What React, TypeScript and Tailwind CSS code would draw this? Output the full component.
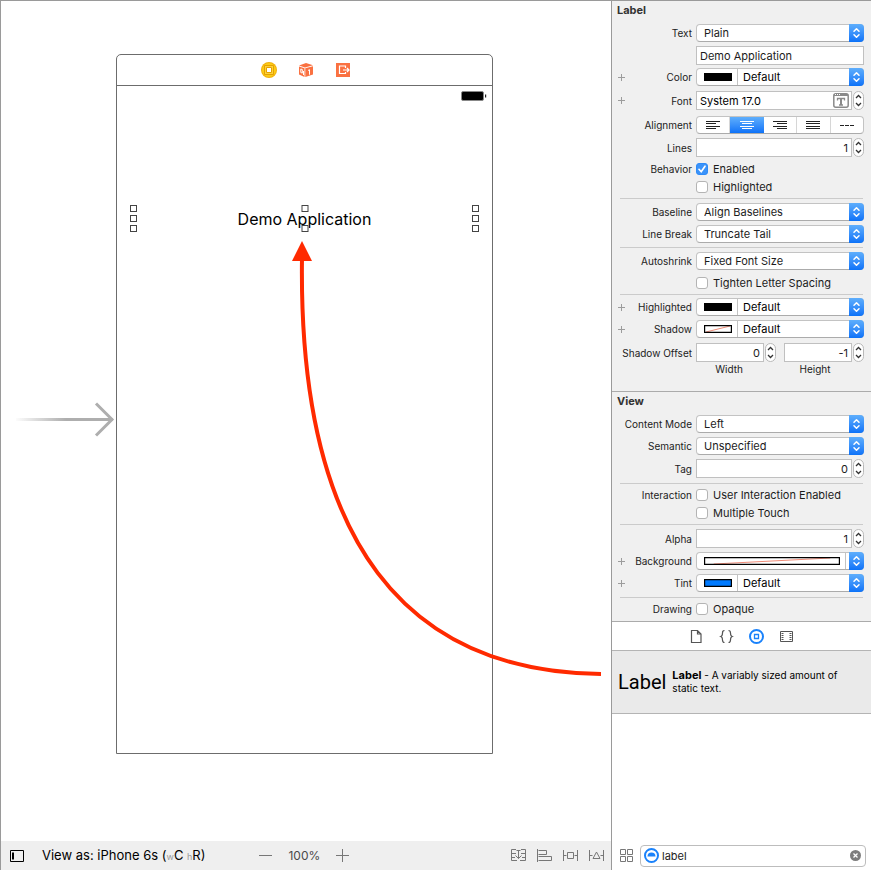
import { useState, type ReactNode } from "react";

const sans = "font-['Inter','Open_Sans',sans-serif]";

function Row({ label, htmlFor, plus, className = "", children }: { label?: string; htmlFor?: string; plus?: boolean; className?: string; children: ReactNode }) {
  return (
    <div className={"flex items-center " + className}>
      <div className="flex w-20 shrink-0 items-center justify-between pl-1.5">
        {plus ? (
          <button type="button" aria-label={"Add " + label + " variation"} className="flex h-2 w-2 items-center text-[#9c9c9c]">
            <svg width="7" height="7" viewBox="0 0 7 7" stroke="currentColor" fill="none"><path d="M3.5 0v7M0 3.5h7" /></svg>
          </button>
        ) : (
          <span />
        )}
        {label && <label htmlFor={htmlFor} className="whitespace-nowrap text-[10px] leading-4 text-[#222]">{label}</label>}
      </div>
      <div className="ml-1 mr-[7px] flex min-w-0 flex-1 items-center">{children}</div>
    </div>
  );
}

function Cap() {
  return (
    <span className="pointer-events-none absolute -inset-y-px -right-px flex w-[15px] items-center justify-center rounded-r-[4px] bg-linear-to-b from-[#5eaefc] to-[#0a72f8]">
      <svg width="9" height="12" viewBox="0 0 9 12" fill="none" stroke="#fff" strokeWidth="1.5" strokeLinecap="round" strokeLinejoin="round"><path d="M2 4.3 4.5 1.8 7 4.3M2 7.7l2.5 2.5L7 7.7" /></svg>
    </span>
  );
}

const shell = "relative flex h-[18px] w-full min-w-0 rounded-[4px] border border-[#c3c3c3] border-b-[#ababab] bg-white";

function Popup({ id, value }: { id: string; value: string }) {
  return (
    <div className={shell}>
      <select id={id} className="w-full appearance-none rounded-[4px] bg-transparent pl-[7px] pr-5 text-[11px] leading-4 text-[#1c1c1c] outline-none">
        <option>{value}</option>
      </select>
      <Cap />
    </div>
  );
}

function Swatch({ kind }: { kind: string }) {
  return (
    <svg className="h-2 w-full" viewBox="0 0 28 8" preserveAspectRatio="none">
      <rect width="28" height="8" fill={kind === "tint" ? "#007aff" : kind === "black" ? "#000" : "#fff"} />
      {kind === "clear" && <path d="M2 7 26 1" stroke="#f08c78" vectorEffect="non-scaling-stroke" fill="none" />}
      <rect width="28" height="8" fill="none" stroke="#000" strokeWidth="2.4" vectorEffect="non-scaling-stroke" />
    </svg>
  );
}

function ColorPopup({ id, kind, wide }: { id: string; kind: string; wide?: boolean }) {
  return (
    <div className={shell}>
      <button type="button" aria-label="Colour well" className={"flex items-center border-r border-[#c3c3c3] pl-[7px] " + (wide ? "mr-[17px] flex-1 pr-[5px]" : "w-[41px] pr-[5px]")}>
        <Swatch kind={kind} />
      </button>
      {wide ? null : (
        <select id={id} className="min-w-0 flex-1 appearance-none bg-transparent pl-[5px] text-[11px] leading-4 text-black outline-none">
          <option>Default</option>
        </select>
      )}
      <Cap />
    </div>
  );
}

function Stepper({ name }: { name: string }) {
  return (
    <span className="ml-px flex h-[19px] w-[11px] shrink-0 flex-col overflow-hidden rounded-full border border-[#b9b9b9] bg-white text-[#333]">
      <button type="button" aria-label={"Increase " + name} className="flex flex-1 items-center justify-center">
        <svg width="7" height="5" viewBox="0 0 7 5" fill="none" stroke="currentColor" strokeWidth="1.3"><path d="M1 4 3.5 1.5 6 4" /></svg>
      </button>
      <button type="button" aria-label={"Decrease " + name} className="flex flex-1 items-center justify-center">
        <svg width="7" height="5" viewBox="0 0 7 5" fill="none" stroke="currentColor" strokeWidth="1.3"><path d="M1 1l2.5 2.5L6 1" /></svg>
      </button>
    </span>
  );
}

const box = "h-[19px] w-full min-w-0 flex-1 border border-[#c0c0c0] bg-white px-[3px] text-[11px] leading-4 text-[#1c1c1c] outline-none";

function NumberField({ id, value, name }: { id: string; value: string; name: string }) {
  return (
    <>
      <input id={id} aria-label={name} defaultValue={value} className={box + " text-right"} />
      <Stepper name={name} />
    </>
  );
}

function Check({ id, text, on }: { id: string; text: string; on?: boolean }) {
  return (
    <label htmlFor={id} className="flex h-[18px] items-center gap-[5px] whitespace-nowrap text-[11px] leading-4 text-[#1c1c1c]">
      <span className="relative flex h-3 w-3">
        <input id={id} type="checkbox" defaultChecked={on} className="peer h-3 w-3 appearance-none rounded-[3px] border border-[#b4b4b4] bg-white checked:border-[#2d8bf8] checked:bg-[#3b93f9]" />
        <svg className="pointer-events-none absolute inset-0 hidden peer-checked:block" width="12" height="12" viewBox="0 0 12 12" fill="none" stroke="#fff" strokeWidth="1.7" strokeLinecap="round"><path d="m3 6.3 2.2 2.4L9 3.2" /></svg>
      </span>
      {text}
    </label>
  );
}

function Rule({ className = "mt-1" }: { className?: string }) {
  return <hr className={"ml-2 mr-2 border-[#cbcbcb] " + className} />;
}

const alignments = [
  ["Left", "M0 .5h14M0 2.500h10M0 5.500h14M0 7.500h10"],
  ["Center", "M0 .5h14M2 2.500h10M0 5.500h14M2 7.500h10"],
  ["Right", "M0 .5h14M4 2.500h10M0 5.500h14M4 7.500h10"],
  ["Justified", "M0 .5h14M0 2.500h14M0 5.500h14M0 7.500h14"],
  ["Natural", "M0 4.500h4M5 4.500h4M10 4.500h4"],
];

function Alignment() {
  const [current, setCurrent] = useState("Center");
  return (
    <div role="group" aria-label="Alignment" className="flex h-[18px] w-full overflow-hidden rounded-[4px] border border-[#c3c3c3] border-b-[#ababab] bg-white">
      {alignments.map(([name, d]) => (
        <button
          key={name}
          type="button"
          aria-label={name}
          aria-pressed={current === name}
          onClick={() => setCurrent(name)}
          className={"flex flex-1 items-center justify-center border-r border-[#d6d6d6] last:border-r-0 " + (current === name ? "border-r-transparent bg-[#0a72f8] bg-linear-to-b from-[#5eaefc] to-[#0a72f8] text-white" : "text-[#222]")}
        >
          <svg width="14" height="8" viewBox="0 0 14 8" fill="none" stroke="currentColor" shapeRendering="crispEdges"><path d={d} /></svg>
        </button>
      ))}
    </div>
  );
}

function Handles({ count, className }: { count: number; className: string }) {
  return (
    <div className={"absolute flex h-[27px] flex-col justify-between " + className}>
      {Array.from({ length: count }, (_, i) => (
        <span key={i} className="h-[7px] w-[7px] border border-[#444] bg-white" />
      ))}
    </div>
  );
}

function Device() {
  return (
    <section className="relative flex h-[700px] w-[377px] flex-col rounded-t-[5px] border border-[#6c6c6c] bg-white">
      <header className="flex h-[31px] items-center justify-center gap-[21px] border-b border-[#6c6c6c] pl-0.5">
        <button type="button" aria-label="View Controller">
          <svg width="16" height="16" viewBox="0 0 16 16"><circle cx="8" cy="8" r="8" fill="#f0b00c" /><circle cx="8" cy="8" r="7" fill="#fccb16" /><path d="M3.5 3.5h9v9h-9z" fill="#fdd23a" stroke="#e5a100" /><path d="M5.500 5.500h5v5h-5z" fill="#fff" stroke="#e5a100" /></svg>
        </button>
        <button type="button" aria-label="First Responder">
          <svg width="16" height="16" viewBox="0 0 16 16" fill="#fa7141"><path d="M1 3.500 8 1l7 2.300L7 5.500z" /><path d="M1 4.500 6.500 6.300V15L1 12.500zM7.300 6.300 15 4.200v8.300L7.300 15z" /><path d="M2.800 7v3.500l1.500.6V7.500zM5.500 9v4M10 8.500l1.500-.8v5" stroke="#fff" fill="none" /></svg>
        </button>
        <button type="button" aria-label="Exit">
          <svg width="16" height="16" viewBox="0 0 16 16"><path d="M1 1h14v14H1z" fill="#fa7141" /><path d="M10.500 6V4h-6v7.500h6V10M8 8h6M12 6l2 2-2 2" stroke="#fff" strokeWidth="1.200" fill="none" /></svg>
        </button>
      </header>
      <div className="flex justify-end pr-[5px] pt-[5px]">
        <svg width="26" height="10" viewBox="0 0 26 10"><rect x=".5" y=".5" width="22" height="9" rx="1.500" fill="#000" stroke="#888" /><path d="M24 3.500h1.200v3H24z" fill="#222" /></svg>
      </div>
      <div className="relative mx-3 mt-[104px] flex h-[27px] items-center justify-center">
        <span className="text-[16px] leading-6 text-black">Demo Application</span>
        <Handles count={3} className="left-px" />
        <Handles count={2} className="left-1/2 -translate-x-1/2" />
        <Handles count={3} className="right-px" />
      </div>
    </section>
  );
}

function Canvas() {
  return (
    <main className="flex min-w-0 flex-1 flex-col border-l border-[#9a9a9a]">
      <div className="relative flex-1 overflow-hidden bg-white pl-[115px] pt-[53px]">
        <Device />
        <svg className="pointer-events-none absolute left-0 top-0" width="610" height="700" viewBox="1 1 610 700" fill="none">
          <defs>
            <linearGradient id="fade" gradientUnits="userSpaceOnUse" x1="14" y1="0" x2="66" y2="0"><stop stopColor="#aeaeae" stopOpacity="0" /><stop offset="1" stopColor="#aeaeae" /></linearGradient>
          </defs>
          <path d="M16 418h97v3H16z" fill="url(#fade)" />
          <path d="m96 403.500 16 16-16 16" stroke="#aeaeae" strokeWidth="3" />
          <path d="M601 674C408 672 298 545 302 258" stroke="#ff2a00" strokeWidth="4" />
          <path d="m302 241 10 20h-20z" fill="#ff2a00" />
        </svg>
      </div>
      <footer className="flex h-[29px] shrink-0 items-center bg-[#efefef] pl-[9px] pr-[7px] text-[12px] leading-4 text-black">
        <button type="button" aria-label="Document outline">
          <svg width="14" height="12" viewBox="0 0 14 12" fill="none" stroke="#000"><path d="M.5.5h13v11H.5z" /><path d="M3 2.500v7" strokeWidth="2" /></svg>
        </button>
        <button type="button" className="ml-[18px] whitespace-nowrap text-[13px]">View as: iPhone 6s (<span className="text-[9px] text-[#999]">w</span>C <span className="text-[9px] text-[#999]">h</span>R)</button>
        <div className="ml-[54px] flex items-center gap-4 text-[#4a4a4a]">
          <button type="button" aria-label="Zoom out"><svg className="block" width="13" height="13" stroke="#777"><path d="M0 6.500h13" /></svg></button>
          <span>100%</span>
          <button type="button" aria-label="Zoom in"><svg className="block" width="13" height="13" stroke="#777"><path d="M0 6.500h13M6.500 0v13" /></svg></button>
        </div>
        <div className="ml-auto flex items-center gap-[11px] text-[#777]">
          <button type="button" aria-label="Stack"><svg className="block" width="15" height="13" viewBox="0 0 15 13" fill="none" stroke="currentColor"><path d="M5 .5H.5v11H6M10 .5h4.500v11H9M.5 4.500H5M10 4.500h4.500M.5 8.500H4M11 8.500h3.500M5.500 1.500h4M7.500 2v7.500M4.500 6.500l3 3 3-3" /></svg></button>
          <button type="button" aria-label="Align"><svg className="block" width="15" height="13" viewBox="0 0 15 13" fill="none" stroke="currentColor"><path d="M.5 0v13M1.500 1.500h8v4h-8M1.500 7.500h13v4h-13" /></svg></button>
          <button type="button" aria-label="Pin"><svg className="block" width="15" height="13" viewBox="0 0 15 13" fill="none" stroke="currentColor"><path d="M.5 1v11M14.500 1v11M.5 6.500h3M11.500 6.500h3M4.500 3.500h6v6h-6z" /></svg></button>
          <button type="button" aria-label="Resolve layout issues"><svg className="block" width="15" height="13" viewBox="0 0 15 13" fill="none" stroke="currentColor"><path d="M.5 1v11M14.500 1v11M.5 6.500h3M11.500 6.500h3M7.500 3l3.500 6.500H4z" /></svg></button>
        </div>
      </footer>
    </main>
  );
}

function Inspector() {
  return (
    <aside className="flex w-[260px] shrink-0 flex-col border-l border-[#9a9a9a] bg-[#f0f0f0]">
      <section className="border-b border-[#ababab] pb-[15px]">
        <h2 className="pl-[5px] text-[11px] font-bold leading-[18px] text-[#333]">Label</h2>
        <Row label="Text" htmlFor="text-kind" className="mt-[5px]"><Popup id="text-kind" value="Plain" /></Row>
        <Row className="mt-1"><input aria-label="Label text" defaultValue="Demo Application" className={box} /></Row>
        <Row label="Color" htmlFor="color" plus className="mt-[3px]"><ColorPopup id="color" kind="black" /></Row>
        <Row label="Font" htmlFor="font" plus className="mt-[5px]">
          <div className="flex h-[19px] min-w-0 flex-1 items-center border border-[#c0c0c0] bg-white pr-0.5">
            <input id="font" defaultValue="System 17.0" className="w-full min-w-0 flex-1 bg-transparent pl-[3px] text-[11px] leading-4 text-black outline-none" />
            <button type="button" aria-label="Choose font">
              <svg className="block" width="16" height="15" viewBox="0 0 16 15" fill="none" stroke="#8a8a8a"><rect x=".8" y=".8" width="14.400" height="13.400" rx="2" strokeWidth="1.500" /><path d="M1 2h14" strokeWidth="2" /><path d="M2 1.500h5" stroke="#fff" strokeDasharray="1 1" /><path d="M4.500 7.500V5.500h7v2M6 12h4" strokeWidth="1.300" /><path d="M8 5v7" strokeWidth="2" /></svg>
            </button>
          </div>
          <Stepper name="font size" />
        </Row>
        <Row label="Alignment" className="mt-1.5"><Alignment /></Row>
        <Row label="Lines" htmlFor="lines" className="mt-1"><NumberField id="lines" value="1" name="Lines" /></Row>
        <Row label="Behavior" htmlFor="enabled" className="mt-[3px]"><Check id="enabled" text="Enabled" on /></Row>
        <Row><Check id="highlighted" text="Highlighted" /></Row>
        <Rule className="mt-0.5" />
        <Row label="Baseline" htmlFor="baseline" className="mt-1"><Popup id="baseline" value="Align Baselines" /></Row>
        <Row label="Line Break" htmlFor="line-break" className="mt-1"><Popup id="line-break" value="Truncate Tail" /></Row>
        <Rule />
        <Row label="Autoshrink" htmlFor="autoshrink" className="mt-1"><Popup id="autoshrink" value="Fixed Font Size" /></Row>
        <Row className="mt-1"><Check id="tighten" text="Tighten Letter Spacing" /></Row>
        <Rule className="mt-0.5" />
        <Row label="Highlighted" htmlFor="highlight-color" plus className="mt-[3px]"><ColorPopup id="highlight-color" kind="black" /></Row>
        <Row label="Shadow" htmlFor="shadow" plus className="mt-1"><ColorPopup id="shadow" kind="clear" /></Row>
        <Row label="Shadow Offset" htmlFor="offset-width" className="mt-[5px]">
          <div className="flex min-w-0 flex-1"><NumberField id="offset-width" value="0" name="Width" /></div>
          <div className="ml-2 flex min-w-0 flex-1"><NumberField id="offset-height" value="-1" name="Height" /></div>
        </Row>
        <Row>
          <label htmlFor="offset-width" className="flex-1 pr-3 text-center text-[10px] leading-[14px] text-[#222]">Width</label>
          <label htmlFor="offset-height" className="ml-2 flex-1 pr-4 text-center text-[10px] leading-[14px] text-[#222]">Height</label>
        </Row>
      </section>

      <section className="border-b border-[#ababab] pb-[3px]">
        <h2 className="pl-[5px] text-[11px] font-bold leading-[18px] text-[#333]">View</h2>
        <Row label="Content Mode" htmlFor="content-mode" className="mt-[5px]"><Popup id="content-mode" value="Left" /></Row>
        <Row label="Semantic" htmlFor="semantic" className="mt-1"><Popup id="semantic" value="Unspecified" /></Row>
        <Row label="Tag" htmlFor="tag" className="mt-1"><NumberField id="tag" value="0" name="Tag" /></Row>
        <Rule className="mt-[5px]" />
        <Row label="Interaction" htmlFor="interaction" className="mt-0.5"><Check id="interaction" text="User Interaction Enabled" /></Row>
        <Row><Check id="multi-touch" text="Multiple Touch" /></Row>
        <Rule className="mt-0.5" />
        <Row label="Alpha" htmlFor="alpha" className="mt-1"><NumberField id="alpha" value="1" name="Alpha" /></Row>
        <Row label="Background" plus className="mt-1"><ColorPopup id="background" kind="clear" wide /></Row>
        <Row label="Tint" htmlFor="tint" plus className="mt-1"><ColorPopup id="tint" kind="tint" /></Row>
        <Rule className="mt-[5px]" />
        <Row label="Drawing" htmlFor="opaque" className="mt-0.5"><Check id="opaque" text="Opaque" /></Row>
      </section>

      <nav className="flex h-[29px] shrink-0 items-center justify-center gap-[15px] border-b border-[#b4b4b4] bg-white text-[#555]">
        <button type="button" aria-label="File templates"><svg className="block" width="15" height="15" viewBox="0 0 15 15" fill="none" stroke="currentColor" strokeWidth="1.200"><path d="M2.500 1.500h6l3.500 3.500v8.500H2.500zM8.500 1.500V5H12" /></svg></button>
        <button type="button" aria-label="Code snippets"><svg className="block" width="15" height="15" viewBox="0 0 15 15" fill="none" stroke="currentColor" strokeWidth="1.200"><path d="M5.500 1.500c-2 0-2 1-2 2.500s0 3-1.700 3.500c1.700.5 1.700 2 1.700 3.500s0 2.500 2 2.500M9.500 1.500c2 0 2 1 2 2.500s0 3 1.700 3.500c-1.700.5-1.700 2-1.700 3.500s0 2.500-2 2.500" /></svg></button>
        <button type="button" aria-label="Object library"><svg className="block" width="15" height="15" viewBox="0 0 15 15" fill="none" stroke="#1a82fb"><circle cx="7.500" cy="7.500" r="6.500" strokeWidth="2" /><path d="M5.500 5.500h4v4h-4z" strokeWidth="1.300" /></svg></button>
        <button type="button" aria-label="Media library"><svg className="block" width="15" height="15" viewBox="0 0 15 15" fill="none" stroke="currentColor"><path d="M1.500 2.500h12v10h-12z" /><path d="M3.500 4v8M11.500 4v8" strokeDasharray="1 1" strokeWidth="2" /></svg></button>
      </nav>
      <button type="button" className="flex h-[63px] shrink-0 items-center gap-1.5 border-b border-[#b4b4b4] bg-[#eaeaea] pl-1.5 pr-5 text-left text-black">
        <span className="font-['Roboto',sans-serif] text-[20px] leading-6">Label</span>
        <span className="text-[10px] leading-[13px]"><b className="text-[11px]">Label</b> - A variably sized amount of static text.</span>
      </button>
      <div className="flex-1 bg-white" />
      <div className="flex h-[29px] shrink-0 items-center bg-white pl-2 pr-[5px]">
        <button type="button" aria-label="Icon view"><svg className="block" width="14" height="14" viewBox="0 0 14 14" fill="none" stroke="#777"><path d="M.5.5h5v5h-5zM7.500.5h5v5h-5zM.5 7.500h5v5h-5zM7.500 7.500h5v5h-5z" /></svg></button>
        <div className="ml-1.5 flex h-[22px] min-w-0 flex-1 items-center rounded-[4px] border border-[#bdbdbd] bg-white px-[3px]">
          <svg className="shrink-0" width="15" height="15" viewBox="0 0 15 15"><circle cx="7.500" cy="7.500" r="6.500" fill="#fff" stroke="#1a82fb" strokeWidth="2" /><path d="M3.500 8.500a4 4 0 0 1 8 0z" fill="#1a82fb" /></svg>
          <input type="text" aria-label="Filter objects" defaultValue="label" className="w-full min-w-0 flex-1 bg-transparent pl-[3px] text-[11px] leading-4 text-[#222] outline-none" />
          <button type="button" aria-label="Clear filter"><svg className="block" width="13" height="13" viewBox="0 0 13 13"><circle cx="6.500" cy="6.500" r="5.500" fill="#7d7d7d" /><path d="m4.500 4.500 4 4M8.500 4.500l-4 4" stroke="#fff" strokeWidth="1.300" /></svg></button>
        </div>
      </div>
    </aside>
  );
}

export default function App() {
  return (
    <div className={"flex min-h-screen border-t border-[#9a9a9a] bg-white " + sans}>
      <Canvas />
      <Inspector />
    </div>
  );
}
